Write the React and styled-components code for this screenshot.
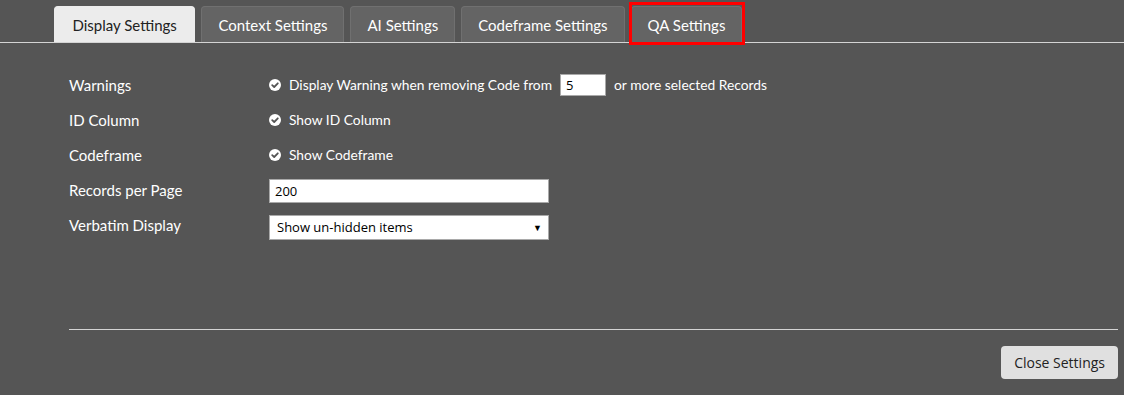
import React from 'react';
import styled, { createGlobalStyle } from 'styled-components';

const GlobalStyle = createGlobalStyle`
  html, body {
    margin: 0;
    padding: 0;
    background: #555555;
  }
  body {
    font-family: 'Lato', 'Open Sans', sans-serif;
    color: #ffffff;
  }
`;

const Page = styled.div`
  width: 1124px;
  height: 395px;
  background: #555555;
  display: flex;
  flex-direction: column;
  overflow: hidden;
`;

const TabBar = styled.nav`
  display: flex;
  align-items: flex-end;
  gap: 6px;
  height: 43px;
  padding-left: 54px;
  border-bottom: 1px solid #d4d4d4;
  box-sizing: border-box;
`;

const Tab = styled.button`
  position: relative;
  height: 36px;
  padding: 0 ${({ active }) => (active ? 17.5 : 16)}px;
  border: 1px solid ${({ active }) => (active ? '#ececec' : '#707070')};
  border-bottom: none;
  border-radius: 4px 4px 0 0;
  background: ${({ active }) => (active ? '#ececec' : '#646464')};
  color: ${({ active }) => (active ? '#222222' : '#ffffff')};
  font-family: inherit;
  font-size: 15px;
  cursor: pointer;

  ${({ flagged }) =>
    flagged &&
    `
    &::after {
      content: '';
      position: absolute;
      left: -3px;
      right: -4px;
      top: -5px;
      bottom: -3px;
      border: 3px solid #ff0000;
    }
  `}
`;

const Body = styled.section`
  flex: 1;
  display: flex;
  flex-direction: column;
  padding: 24px 6px 0 69px;
`;

const Form = styled.div`
  display: grid;
  grid-template-columns: 200px auto;
  grid-auto-rows: 35px;
  align-items: center;
  height: 263px;
  align-content: start;
  border-bottom: 1px solid #d4d4d4;
  box-sizing: border-box;
`;

const Label = styled.div`
  font-size: 15px;
  color: #ffffff;
`;

const Field = styled.div`
  display: flex;
  align-items: center;
  gap: 8px;
  font-size: 13.8px;
`;

const Check = styled.span`
  display: inline-flex;
  width: 12px;
  height: 12px;
`;

const NumberInput = styled.input`
  width: ${({ w }) => w}px;
  height: 24px;
  margin-top: 2px;
  box-sizing: border-box;
  border: 1px solid #a9a9a9;
  padding: 0 5px;
  font-family: 'Open Sans', sans-serif;
  font-size: 13px;
  color: #000;
  background: #fff;
  outline: none;
`;

const SmallInput = styled(NumberInput)`
  height: 22px;
  margin-top: 1px;
`;

const Select = styled.div`
  width: 280px;
  height: 25px;
  margin-top: 5px;
  box-sizing: border-box;
  border: 1px solid #a9a9a9;
  background: #fff;
  color: #000;
  display: flex;
  align-items: center;
  justify-content: space-between;
  padding: 0 6px 0 7px;
  font-family: 'Open Sans', sans-serif;
  font-size: 13px;
`;

const Caret = styled.span`
  font-size: 9px;
`;

const Footer = styled.div`
  display: flex;
  justify-content: flex-end;
  padding-top: 16px;
`;

const CloseButton = styled.button`
  height: 33px;
  padding: 0 13px;
  border: none;
  border-radius: 4px;
  background: #e0e0e0;
  color: #222;
  font-family: 'Open Sans', sans-serif;
  font-size: 14px;
  cursor: pointer;
`;

function CheckIcon() {
  return (
    <Check>
      <svg width="12" height="12" viewBox="0 0 12 12">
        <circle cx="6" cy="6" r="6" fill="#ffffff" />
        <path d="M3.2 6.1 L5.2 8 L8.8 4.3" stroke="#555555" strokeWidth="1.8" fill="none" strokeLinecap="round" strokeLinejoin="round" />
      </svg>
    </Check>
  );
}

const tabs = ['Display Settings', 'Context Settings', 'AI Settings', 'Codeframe Settings', 'QA Settings'];

export default function App() {
  return (
    <Page>
      <GlobalStyle />
      <TabBar>
        {tabs.map((t, i) => (
          <Tab key={t} active={i === 0} flagged={i === 4}>
            {t}
          </Tab>
        ))}
      </TabBar>
      <Body>
        <Form>
          <Label>Warnings</Label>
          <Field>
            <CheckIcon />
            Display Warning when removing Code from
            <SmallInput w={46} defaultValue="5" />
            or more selected Records
          </Field>
          <Label>ID Column</Label>
          <Field>
            <CheckIcon />
            Show ID Column
          </Field>
          <Label>Codeframe</Label>
          <Field>
            <CheckIcon />
            Show Codeframe
          </Field>
          <Label>Records per Page</Label>
          <Field>
            <NumberInput w={280} defaultValue="200" />
          </Field>
          <Label>Verbatim Display</Label>
          <Field>
            <Select>
              Show un-hidden items
              <Caret>▼</Caret>
            </Select>
          </Field>
        </Form>
        <Footer>
          <CloseButton>Close Settings</CloseButton>
        </Footer>
      </Body>
    </Page>
  );
}
